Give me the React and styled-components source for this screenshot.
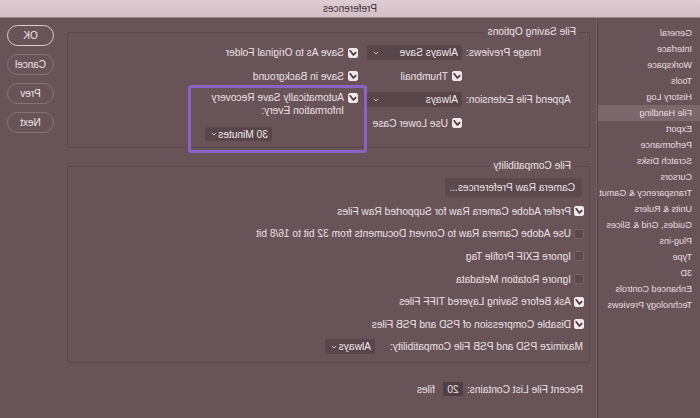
import React from "react";
import styled, { createGlobalStyle } from "styled-components";

const Global = createGlobalStyle`
  html, body { margin: 0; padding: 0; background: #685458; }
  body { font-family: "Liberation Sans", Arial, sans-serif; }
  * { box-sizing: border-box; }
`;

const Window = styled.div`
  width: 700px;
  height: 418px;
  overflow: hidden;
  background: #685458;
  color: #ece1e5;
  font-size: 10.2px;
  display: flex;
  flex-direction: column;
  transform: scaleX(-1);
`;

const TitleBar = styled.div`
  height: 18px;
  flex: none;
  background: linear-gradient(#decdd3, #d3bfc6);
  border-bottom: 1px solid #9c868d;
  color: #3e3036;
  font-size: 10px;
  display: flex;
  align-items: center;
  justify-content: center;
`;

const Body = styled.div`
  flex: 1;
  display: flex;
  min-height: 0;
`;

const Sidebar = styled.nav`
  width: 103px;
  flex: none;
  border-right: 1px solid #574448;
  box-shadow: 1px 0 0 #75626a;
  padding-top: 7px;
  display: flex;
  flex-direction: column;
`;

const NavItem = styled.div`
  height: 16px;
  line-height: 16px;
  padding-left: 8px;
  font-size: 9px;
  color: #e9dde2;
  white-space: nowrap;
  background: ${(p) => (p.$active ? "#7b676c" : "transparent")};
`;

const Main = styled.div`
  flex: 1;
  padding: 8px 13px 0 7px;
  display: flex;
  flex-direction: column;
`;

const Group = styled.fieldset`
  margin: 0;
  padding: ${(p) => p.$pad};
  border: 1px solid #5a474c;
  border-radius: 2px;
  box-shadow: inset 1px 1px 0 #72606a33;
  min-width: 0;
  position: relative;
`;

const Legend = styled.legend`
  margin-left: 10px;
  padding: 0 3px;
  font-size: 10.2px;
  line-height: 12px;
  color: #ece1e5;
`;

const SavingGrid = styled.div`
  display: grid;
  grid-template-columns: 127px 95px 1fr;
  grid-auto-rows: 23.5px;
  align-items: center;
`;

const Label = styled.div`
  text-align: right;
  padding-right: 4px;
  white-space: nowrap;
`;

const CheckRow = styled.label`
  display: flex;
  align-items: center;
  gap: 4px;
  white-space: nowrap;
  padding-left: ${(p) => p.$indent || 0}px;
  grid-column: ${(p) => p.$col || "auto"};
`;

const Box = styled.span`
  width: 10px;
  height: 10px;
  flex: none;
  border-radius: 2px;
  display: inline-flex;
  align-items: center;
  justify-content: center;
  background: ${(p) => (p.$on ? "#f1e6ea" : "#5b484d")};
  border: 1px solid ${(p) => (p.$on ? "#f1e6ea" : "#766369")};
`;

const Check = ({ on }) => (
  <Box $on={on}>
    {on && (
      <svg width="8" height="8" viewBox="0 0 8 8">
        <path d="M1.3 3.6 L3.6 6 L6.8 1.8" fill="none" stroke="#4a383e" strokeWidth="1.7" strokeLinecap="round" strokeLinejoin="round" />
      </svg>
    )}
  </Box>
);

const SelectBox = styled.div`
  height: ${(p) => p.$h || 15}px;
  width: ${(p) => (p.$w ? p.$w + "px" : "auto")};
  background: #57454a;
  border-radius: 2px;
  display: flex;
  align-items: center;
  justify-content: space-between;
  padding: 0 6px 0 4px;
  white-space: nowrap;
  color: #f3e9ed;
`;

const Chevron = () => (
  <svg width="6" height="4" viewBox="0 0 6 4">
    <path d="M0.8 0.8 L3 3 L5.2 0.8" fill="none" stroke="#cfc0c6" strokeWidth="1" />
  </svg>
);

const Select = ({ children, w, h }) => (
  <SelectBox $w={w} $h={h}>
    <span>{children}</span>
    <Chevron />
  </SelectBox>
);

const RecoveryCell = styled.div`
  grid-column: 3;
  grid-row: 3 / span 2;
  align-self: start;
  position: relative;
  padding: 3px 0 0 9px;
  &::before {
    content: "";
    position: absolute;
    left: 0px;
    top: -3px;
    width: 173px;
    height: 62px;
    border: 3px solid #8d62c6;
    border-radius: 3px;
    pointer-events: none;
  }
`;

const RecoveryTop = styled.div`
  display: flex;
  align-items: flex-start;
  gap: 4px;
  line-height: 13px;
  & > span:first-child { margin-top: 2px; }
`;

const RecoveryDrop = styled.div`
  margin: 10px 0 0 86px;
  width: 67px;
`;

const Spacer = styled.div`
  height: ${(p) => p.$h}px;
  flex: none;
`;

const CompatList = styled.div`
  display: flex;
  flex-direction: column;
`;

const RawButton = styled.div`
  margin-left: 2px;
  width: 137px;
  height: 19px;
  background: #5b494e;
  border-radius: 2px;
  display: flex;
  align-items: center;
  padding-left: 7px;
  margin-bottom: 3px;
`;

const CompatRow = styled.div`
  height: 22.6px;
  display: flex;
  align-items: center;
  gap: 3px;
  white-space: nowrap;
`;

const MaxRow = styled.div`
  height: 22.6px;
  display: flex;
  align-items: center;
  gap: 15px;
  padding-left: 1px;
  white-space: nowrap;
`;

const RecentRow = styled.div`
  margin-top: 18px;
  padding-left: 7px;
  height: 16px;
  display: flex;
  align-items: center;
  white-space: nowrap;
`;

const NumInput = styled.div`
  width: 20px;
  height: 14px;
  margin: 0 8px 0 4px;
  background: #4f3e43;
  display: flex;
  align-items: center;
  justify-content: center;
`;

const ButtonCol = styled.div`
  width: 47px;
  flex: none;
  margin-right: 7px;
  padding-top: 7px;
  display: flex;
  flex-direction: column;
  gap: 8px;
`;

const PillButton = styled.div`
  height: 21px;
  border-radius: 11px;
  border: 1px solid ${(p) => (p.$primary ? "#dccbd1" : "#87737a")};
  display: flex;
  align-items: center;
  justify-content: center;
  font-size: 10px;
  color: #efe5e9;
`;

const navItems = [
  "General", "Interface", "Workspace", "Tools", "History Log", "File Handling",
  "Export", "Performance", "Scratch Disks", "Cursors", "Transparency & Gamut",
  "Units & Rulers", "Guides, Grid & Slices", "Plug-ins", "Type", "3D",
  "Enhanced Controls", "Technology Previews",
];

const compat = [
  ["Prefer Adobe Camera Raw for Supported Raw Files", true],
  ["Use Adobe Camera Raw to Convert Documents from 32 bit to 16/8 bit", false],
  ["Ignore EXIF Profile Tag", false],
  ["Ignore Rotation Metadata", false],
  ["Ask Before Saving Layered TIFF Files", true],
  ["Disable Compression of PSD and PSB Files", true],
];

export default function App() {
  return (
    <>
      <Global />
      <Window>
        <TitleBar>Preferences</TitleBar>
        <Body>
          <Sidebar>
            {navItems.map((n) => (
              <NavItem key={n} $active={n === "File Handling"}>{n}</NavItem>
            ))}
          </Sidebar>
          <Main>
            <Group $pad="3px 0 12px 0">
              <Legend>File Saving Options</Legend>
              <SavingGrid>
                <Label>Image Previews:</Label>
                <Select>Always Save</Select>
                <CheckRow $indent={9}><Check on />Save As to Original Folder</CheckRow>

                <CheckRow $col="2"><Check on />Thumbnail</CheckRow>
                <CheckRow $indent={9}><Check on />Save in Background</CheckRow>

                <Label>Append File Extension:</Label>
                <Select>Always</Select>
                <RecoveryCell>
                  <RecoveryTop>
                    <Check on />
                    <div>Automatically Save Recovery<br />Information Every:</div>
                  </RecoveryTop>
                  <RecoveryDrop>
                    <Select h={14}>30 Minutes</Select>
                  </RecoveryDrop>
                </RecoveryCell>

                <CheckRow $col="2"><Check on />Use Lower Case</CheckRow>
              </SavingGrid>
            </Group>
            <Spacer $h={12} />
            <Group $pad="6px 0 4px 5px">
              <Legend>File Compatibility</Legend>
              <CompatList>
                <RawButton>Camera Raw Preferences...</RawButton>
                {compat.map(([t, on]) => (
                  <CompatRow key={t}><Check on={on} />{t}</CompatRow>
                ))}
                <MaxRow>
                  <span>Maximize PSD and PSB File Compatibility:</span>
                  <Select w={50}>Always</Select>
                </MaxRow>
              </CompatList>
            </Group>
            <RecentRow>
              Recent File List Contains:
              <NumInput>20</NumInput>
              files
            </RecentRow>
          </Main>
          <ButtonCol>
            <PillButton $primary>OK</PillButton>
            <PillButton>Cancel</PillButton>
            <PillButton>Prev</PillButton>
            <PillButton>Next</PillButton>
          </ButtonCol>
        </Body>
      </Window>
    </>
  );
}
